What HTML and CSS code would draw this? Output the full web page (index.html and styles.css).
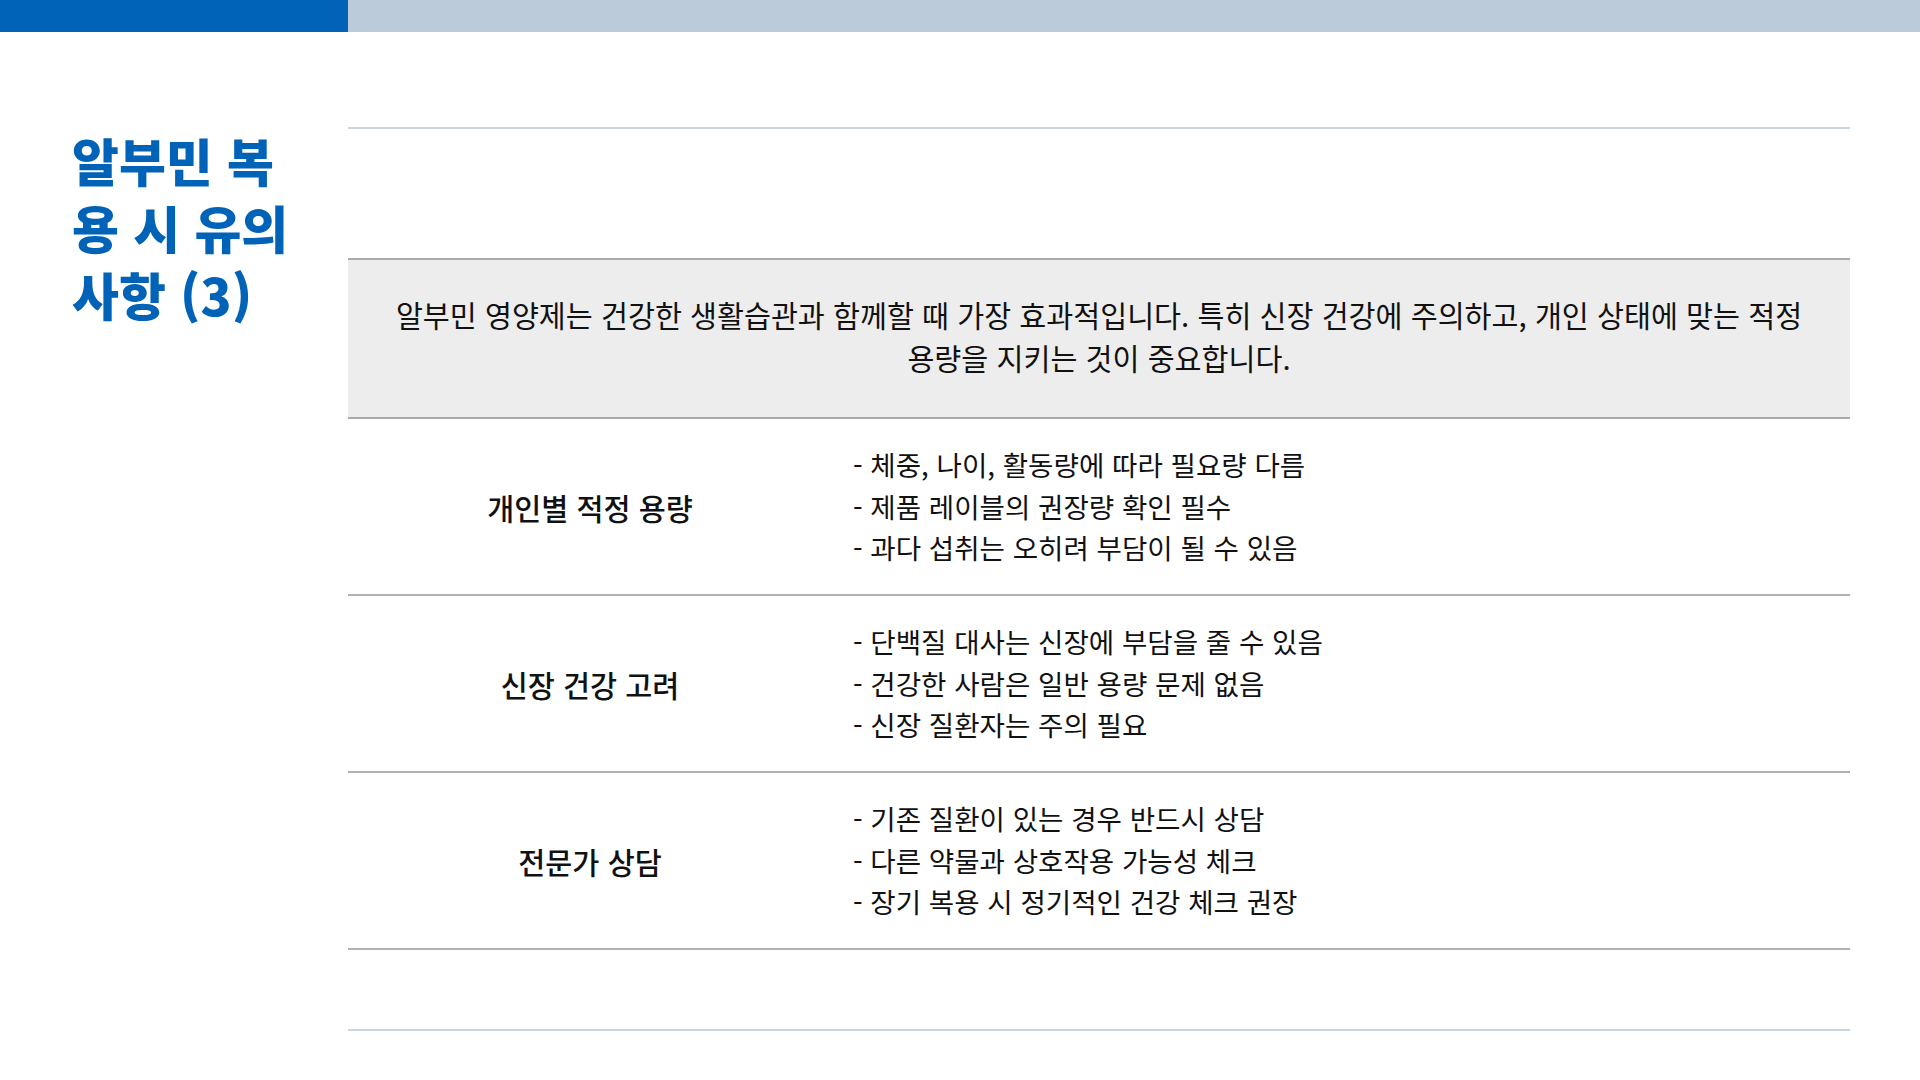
FILE: index.html
```html
<!DOCTYPE html>
<html lang="ko">
<head>
<meta charset="utf-8">
<title>알부민 복용 시 유의사항 (3)</title>
<link rel="stylesheet" href="styles.css">
</head>
<body>
<div class="topbar"><div class="topbar-accent"></div></div>
<main class="slide">
  <aside class="title-col">
    <h1 class="title">알부민 복용 시 유의사항 (3)</h1>
  </aside>
  <section class="content">
    <div class="spacer-top"></div>
    <div class="summary">
      <p>알부민 영양제는 건강한 생활습관과 함께할 때 가장 효과적입니다. 특히 신장 건강에 주의하고, 개인 상태에 맞는 적정 용량을 지키는 것이 중요합니다.</p>
    </div>
    <div class="row">
      <div class="label">개인별 적정 용량</div>
      <ul class="points">
        <li>- 체중, 나이, 활동량에 따라 필요량 다름</li>
        <li>- 제품 레이블의 권장량 확인 필수</li>
        <li>- 과다 섭취는 오히려 부담이 될 수 있음</li>
      </ul>
    </div>
    <div class="row">
      <div class="label">신장 건강 고려</div>
      <ul class="points">
        <li>- 단백질 대사는 신장에 부담을 줄 수 있음</li>
        <li>- 건강한 사람은 일반 용량 문제 없음</li>
        <li>- 신장 질환자는 주의 필요</li>
      </ul>
    </div>
    <div class="row">
      <div class="label">전문가 상담</div>
      <ul class="points">
        <li>- 기존 질환이 있는 경우 반드시 상담</li>
        <li>- 다른 약물과 상호작용 가능성 체크</li>
        <li>- 장기 복용 시 정기적인 건강 체크 권장</li>
      </ul>
    </div>
    <div class="spacer-bottom"></div>
  </section>
</main>
</body>
</html>
```
FILE: styles.css
```css
* { box-sizing: border-box; }
html, body {
  margin: 0;
  padding: 0;
  background: #ffffff;
}
body {
  width: 1920px;
  height: 1080px;
  overflow: hidden;
  font-family: "Noto Sans CJK KR", "Noto Sans", sans-serif;
  color: #111111;
}
.topbar {
  height: 32px;
  background: #BCCBDA;
  display: flex;
}
.topbar-accent {
  width: 348px;
  background: #0063B7;
}
.slide {
  display: flex;
  padding-top: 95px;
}
.title-col {
  width: 348px;
  padding-left: 72px;
  flex: none;
}
.title {
  margin: 0;
  width: 236px;
  font-size: 51px;
  line-height: 67px;
  font-weight: 900;
  color: #0063B7;
}
.content {
  width: 1502px;
  border-top: 2px solid #C8D4E0;
}
.spacer-top {
  height: 129px;
}
.summary {
  height: 161px;
  background: #EDEDED;
  border-top: 2px solid #AAAAAA;
  border-bottom: 2px solid #AAAAAA;
  display: flex;
  align-items: center;
  justify-content: center;
  padding: 0 30px 5px;
}
.summary p {
  margin: 0;
  font-size: 29.3px;
  line-height: 43.5px;
  text-align: center;
  word-break: keep-all;
}
.row {
  height: 177px;
  display: grid;
  grid-template-columns: 484px 1fr;
  align-items: center;
  border-bottom: 2px solid #B0B0B0;
}
.label {
  text-align: center;
  font-size: 29.4px;
  font-weight: 500;
}
.points {
  list-style: none;
  margin: 0;
  padding: 0 0 0 21px;
  font-size: 27.6px;
  line-height: 41.5px;
}
.spacer-bottom {
  height: 81px;
  border-bottom: 2px solid #C8D4E0;
}
```
